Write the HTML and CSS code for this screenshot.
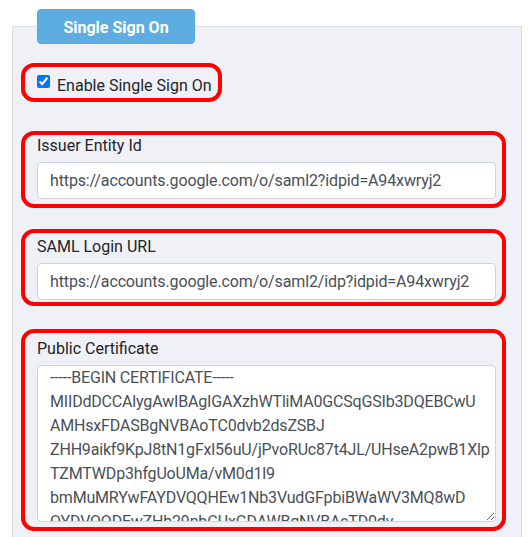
FILE: index.html
```html
<!DOCTYPE html>
<html>
<head>
<meta charset="utf-8">
<link rel="stylesheet" href="styles.css">
</head>
<body>
<fieldset class="panel">
  <legend class="panel-legend"><button type="button" class="tab-btn">Single Sign On</button></legend>
  <div class="hl hl-check">
    <input type="checkbox" id="sso" class="check" checked>
    <label for="sso" class="check-label">Enable Single Sign On</label>
  </div>
  <div class="hl hl-field hl-issuer">
    <label class="field-label" for="issuer">Issuer Entity Id</label>
    <input class="form-control" id="issuer" type="text" value="https://accounts.google.com/o/saml2?idpid=A94xwryj2">
  </div>
  <div class="hl hl-field hl-saml">
    <label class="field-label" for="saml">SAML Login URL</label>
    <input class="form-control" id="saml" type="text" value="https://accounts.google.com/o/saml2/idp?idpid=A94xwryj2">
  </div>
  <div class="hl hl-field hl-cert">
    <label class="field-label" for="cert">Public Certificate</label>
    <textarea class="form-control cert-area" id="cert">-----BEGIN CERTIFICATE-----
MIIDdDCCAlygAwIBAgIGAXzhWTliMA0GCSqGSIb3DQEBCwU
AMHsxFDASBgNVBAoTC0dvb2dsZSBJ
ZHH9aikf9KpJ8tN1gFxl56uU/jPvoRUc87t4JL/UHseA2pwB1Xlp
TZMTWDp3hfgUoUMa/vM0d1l9
bmMuMRYwFAYDVQQHEw1Nb3VudGFpbiBWaWV3MQ8wD
QYDVQQDEwZHb29nbGUxGDAWBgNVBAsTD0dv
bmMuMRYwFAYDVQQHEw1Nb3VudGFp
-----END CERTIFICATE-----</textarea>
  </div>
</fieldset>
</body>
</html>
```
FILE: styles.css
```css
html, body {
  margin: 0;
  background: #ffffff;
}
body {
  padding-top: 9px;
  font-family: Roboto, "Noto Sans", sans-serif;
  font-size: 16px;
  color: #212529;
}
.panel {
  margin: 0 10px 0 12px;
  border: 1px solid #dcdde2;
  background: #f0f1f6;
  padding: 0 15px 40px 8px;
  min-width: 0;
}
.panel-legend {
  margin-left: 16px;
  padding: 0;
}
.tab-btn {
  display: block;
  width: 158px;
  height: 35px;
  background: #5dade2;
  border: 1px solid #5aa9dc;
  border-radius: 4px;
  color: #ffffff;
  font-family: inherit;
  font-size: 16px;
  font-weight: 700;
  padding: 1px 0 0;
}
.hl {
  border: 4px solid #ff0000;
  border-radius: 13px;
}
.hl-check {
  margin-top: 19px;
  display: flex;
  width: max-content;
  align-items: flex-start;
  gap: 7px;
  height: 23px;
  padding: 8px 6px 0 12px;
}
.check {
  margin: 0;
  width: 13px;
  height: 13px;
}
.check-label {
  line-height: 20px;
  margin-top: 1px;
}
.hl-field {
  display: flex;
  flex-direction: column;
  padding: 0 6px 5px 12px;
}
.hl-issuer {
  margin-top: 29px;
  padding-top: 1px;
}
.hl-saml {
  margin-top: 21px;
  padding-top: 4px;
  padding-bottom: 2px;
}
.hl-cert {
  margin-top: 23px;
  padding-top: 6px;
  padding-bottom: 5px;
}
.field-label {
  line-height: 20px;
  margin-bottom: 6px;
}
.form-control {
  box-sizing: border-box;
  width: 100%;
  height: 37px;
  margin: 0;
  padding: 0 12px;
  border: 1px solid #ced4da;
  border-radius: 4px;
  background: #ffffff;
  color: #495057;
  font-family: inherit;
  font-size: 16px;
  letter-spacing: -0.13px;
}
.cert-area {
  height: 157px;
  padding: 0 12px;
  line-height: 24px;
  letter-spacing: -0.18px;
  white-space: pre;
  resize: vertical;
  overflow: hidden;
}
```
